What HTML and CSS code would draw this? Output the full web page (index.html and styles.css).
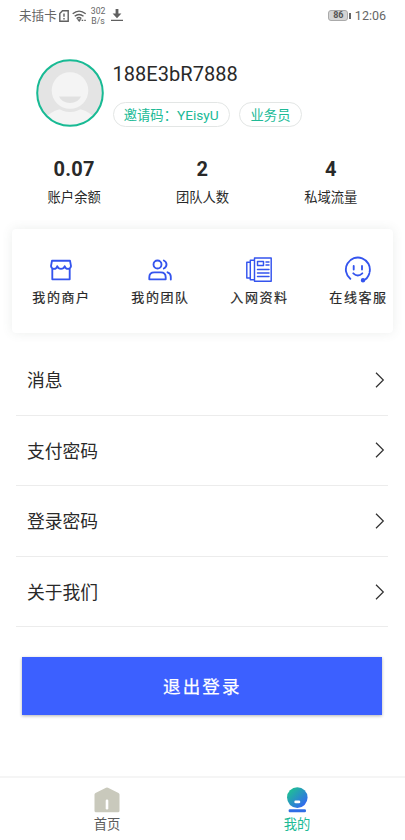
FILE: index.html
```html
<!DOCTYPE html>
<html lang="zh-CN">
<head>
<meta charset="utf-8">
<meta name="viewport" content="width=device-width, initial-scale=1">
<title>我的</title>
<link rel="stylesheet" href="styles.css">
</head>
<body>
<div class="app">
  <header class="status">
    <span class="carrier">未插卡</span>
    <svg class="sim" width="10" height="12" viewBox="0 0 10 12" fill="none" stroke="#606060" stroke-width="1.4"><path d="M3.5.8h5.7v10.4H.8V3.5zM5 3.5v3.3M5 8v1.4"/></svg>
    <svg class="wifi" width="15" height="12" viewBox="0 0 15 12" fill="none" stroke="#606060" stroke-width="1.4"><path d="M.7 3.800Q7 -1.600 13.700 3.800M2.700 6.300Q7 2.600 11.500 6.300M4.600 8.600Q7 6.600 9.300 8.600"/><path d="M6.200 9.800h2L7.200 11zM9.700 10.300h1.500M12.300 10.300h1.500" fill="#606060" stroke-width="1.2"/></svg>
    <span class="speed"><span>302</span><span>B/s</span></span>
    <svg class="download" width="12" height="13" viewBox="0 0 12 13" fill="#606060"><path d="M4.600 0h2.800v4.600h3L6 9.300 1.600 4.600h3zM0 10.700h12v1.400H0z"/></svg>
    <span class="battery">86</span><span class="battery-tip"></span>
    <time class="clock">12:06</time>
  </header>

  <section class="profile">
    <svg class="avatar" width="68" height="68" viewBox="0 0 68 68">
      <defs><clipPath id="face"><circle cx="34" cy="34" r="32.500"/></clipPath></defs>
      <circle cx="34" cy="34" r="33" fill="#e4e4e4"/>
      <g clip-path="url(#face)"><ellipse cx="34" cy="66" rx="27" ry="17" fill="#f4f4f4"/><circle cx="34" cy="33" r="20" fill="#e4e4e4"/><circle cx="34" cy="31.500" r="18.300" fill="#f4f4f4"/><path d="M23 37.500h22q-3 6.500-11 6.500t-11-6.500z" fill="#e1e1e1"/></g>
      <circle cx="34" cy="34" r="32.800" fill="none" stroke="#18ba94" stroke-width="2"/>
    </svg>
    <div class="identity">
      <h1 class="name">188E3bR7888</h1>
      <div class="tags"><span class="tag tag-code">邀请码：<span class="code">YEisyU</span></span><span class="tag tag-role">业务员</span></div>
    </div>
  </section>

  <section class="stats">
    <div class="stat"><strong>0.07</strong><span>账户余额</span></div>
    <div class="stat"><strong>2</strong><span>团队人数</span></div>
    <div class="stat"><strong>4</strong><span>私域流量</span></div>
  </section>

  <nav class="shortcuts">
    <a class="shortcut">
      <svg width="28" height="28" viewBox="0 0 28 28"><path d="M5 4.700h18l1 5.500q-.5 2.700-3 2.700-2.500 0-3.300-2.700-1 2.700-3.700 2.700t-3.700-2.700Q9.500 12.900 7 12.900q-2.500 0-3-2.700zM5.300 12.500v10.800h17.400V12.500"/></svg>
      <span>我的商户</span>
    </a>
    <a class="shortcut">
      <svg width="28" height="28" viewBox="0 0 28 28"><circle cx="11.500" cy="8.500" r="4"/><path d="M17.800 4.500q2.700 1.300 2.700 4t-2.700 4M3.300 23.300v-2q0-5 5-5h6.400q5 0 5 5v2zM21.500 16.300q3.300.9 3.300 4.500v2.800"/></svg>
      <span>我的团队</span>
    </a>
    <a class="shortcut">
      <svg width="28" height="28" viewBox="0 0 28 28"><path d="M9.500 2h16.700v23.200H9.500zM9.500 4.200H5.300v19.500h4.200M5.300 6.200H1.800v15.800h3.500M12.500 5.500h6v4h-6zM21 6h3M21 9h3M12.500 13.500h11.500M12.500 17h11.500M12.500 20.500h11.500" stroke-width="1.450"/></svg>
      <span>入网资料</span>
    </a>
    <a class="shortcut">
      <svg width="28" height="28" viewBox="0 0 28 28"><path d="M6.300 22.800A12 12 0 1 1 25.600 16M25.300 17.500Q23.800 22.800 19 24.500M9.700 10v3.500M18 10v3.500M9.300 17.300q4.500 4.300 9 0"/><circle cx="19" cy="24.300" r="1.300" fill="#3454ee"/></svg>
      <span>在线客服</span>
    </a>
  </nav>

  <ul class="menu">
    <li><span>消息</span><svg width="10" height="16" viewBox="0 0 10 16"><path d="M1 .8 8.300 8 1 15.200"/></svg></li>
    <li><span>支付密码</span><svg width="10" height="16" viewBox="0 0 10 16"><path d="M1 .8 8.300 8 1 15.200"/></svg></li>
    <li><span>登录密码</span><svg width="10" height="16" viewBox="0 0 10 16"><path d="M1 .8 8.300 8 1 15.200"/></svg></li>
    <li><span>关于我们</span><svg width="10" height="16" viewBox="0 0 10 16"><path d="M1 .8 8.300 8 1 15.200"/></svg></li>
  </ul>

  <button class="logout" type="button">退出登录</button>

  <footer class="tabs">
    <a class="tab">
      <svg width="26" height="26" viewBox="0 0 26 26"><path d="M12 .8q1-.6 2 0l10.500 5.300q1 .5 1 1.500v16.200q0 1.500-1.500 1.500H2q-1.500 0-1.500-1.500V7.600q0-1 1-1.500z" fill="#c9c9bc"/><rect x="11.700" y="12.500" width="2.600" height="10" rx="1.200" fill="#fff"/></svg>
      <span>首页</span>
    </a>
    <a class="tab tab-active">
      <svg width="26" height="26" viewBox="0 0 26 26"><defs><linearGradient id="me" x1="0.100" y1="0.100" x2="0.900" y2="0.900"><stop offset=".1" stop-color="#20b99b"/><stop offset="1" stop-color="#3264f4"/></linearGradient></defs><circle cx="13.300" cy="10.600" r="10.300" fill="url(#me)"/><rect x="10.300" y="13.500" width="6" height="2.800" rx="1.400" fill="#fff"/><rect x="4.600" y="22.200" width="17.400" height="3" rx="1.300" fill="#2f6de6"/></svg>
      <span>我的</span>
    </a>
  </footer>
</div>
</body>
</html>
```
FILE: styles.css
```css
* { box-sizing: border-box; }

body {
  margin: 0;
  background: #fff;
  color: #292929;
  font-family: Roboto, "Noto Sans CJK SC", sans-serif;
}

svg { display: block; flex: none; }

.app {
  display: flex;
  flex-direction: column;
  width: 405px;
  height: 840px;
  overflow: hidden;
}

.status {
  display: flex;
  align-items: center;
  height: 31px;
  padding: 0 19px;
  color: #666;
  font-size: 12.6px;
  line-height: 16px;
  flex: none;
}

.carrier { padding-top: 1px; }
.sim { margin-left: 2px; }
.wifi { margin-left: 3px; }

.speed {
  display: flex;
  flex-direction: column;
  align-items: center;
  margin-left: 4px;
  font-size: 8.7px;
  line-height: 10px;
}

.download { margin-left: 6px; }

.battery {
  width: 20px;
  height: 11px;
  margin-left: auto;
  border: 1px solid #aaa;
  border-radius: 3px;
  background: #d4d4d4;
  color: #555;
  font-size: 9px;
  font-weight: 700;
  line-height: 9px;
  text-align: center;
}

.battery-tip { width: 1.5px; height: 6px; margin-left: 1px; background: #666; }
.clock { margin-left: 4px; font-size: 12.5px; }

.profile {
  display: flex;
  height: 96px;
  padding: 28px 0 0 36px;
  flex: none;
}

.identity { margin-left: 8.500px; }

.name {
  margin: 0;
  padding-top: 3px;
  font-size: 20px;
  font-weight: 400;
  line-height: 24px;
  letter-spacing: .05px;
}

.tags { display: flex; gap: 9px; margin-top: 16px; }

.tag {
  height: 25px;
  border: 1px solid #e3e6e5;
  border-radius: 13px;
  color: #20ba96;
  font-size: 13.3px;
  line-height: 25px;
  text-align: center;
  white-space: nowrap;
}

.tag-code { width: 117.500px; }
.code { font-size: 13.700px; }
.tag-role { width: 63px; }

.stats {
  display: flex;
  height: 102px;
  padding: 30px 10px 0 10px;
  flex: none;
}

.stat {
  display: flex;
  flex: 1;
  flex-direction: column;
  align-items: center;
}

.stat strong { font-size: 20px; line-height: 24px; letter-spacing: .3px; }
.stat span { margin-top: 7px; font-size: 13.3px; line-height: 20px; }

.shortcuts {
  display: flex;
  width: 381px;
  height: 104px;
  margin-left: 12px;
  padding-top: 27px;
  border-radius: 4px;
  box-shadow: 0 0 11px rgba(80, 100, 90, .11);
  flex: none;
}

.shortcut {
  display: flex;
  flex: 0 0 99px;
  flex-direction: column;
  align-items: center;
  font-size: 13px;
  line-height: 20px;
  letter-spacing: 1.600px;
}

.shortcut svg {
  margin-right: 2px;
  fill: none;
  stroke: #3454ee;
  stroke-width: 1.850;
  stroke-linecap: round;
  stroke-linejoin: round;
}

.shortcut span { margin-top: 4px; white-space: nowrap; -webkit-text-stroke: .2px currentColor; }

.menu {
  width: 372px;
  margin: 12px 0 0 16px;
  padding: 0;
  list-style: none;
}

.menu li {
  display: flex;
  align-items: center;
  justify-content: space-between;
  height: 70.600px;
  padding: 0 3px 0 11px;
  border-bottom: 1px solid #ececec;
  font-size: 17.800px;
  line-height: 26px;
}

.menu span { padding-top: 3px; }
.menu svg { fill: none; stroke: #303030; stroke-width: 1.2; }

.logout {
  width: 360px;
  height: 58px;
  margin: 29.500px 0 0 22.300px;
  padding: 2px 0 0;
  border: 0;
  background: #3c60ff;
  box-shadow: 0 1px 3px rgba(0, 0, 0, .3);
  color: #fff;
  font: 400 17.500px/56px Roboto, "Noto Sans CJK SC", sans-serif;
  letter-spacing: 2.100px;
  -webkit-text-stroke: .25px currentColor;
  flex: none;
}

.tabs {
  display: flex;
  height: 64px;
  margin-top: auto;
  padding: 9px 13px 0 12px;
  border-top: 2px solid #f5f5f5;
  flex: none;
}

.tab {
  display: flex;
  flex: 1;
  flex-direction: column;
  align-items: center;
  color: #5c5c5c;
  font-size: 13.3px;
  line-height: 20px;
}

.tab span { margin-top: 2px; }
.tab-active { color: #20ba96; }
```
